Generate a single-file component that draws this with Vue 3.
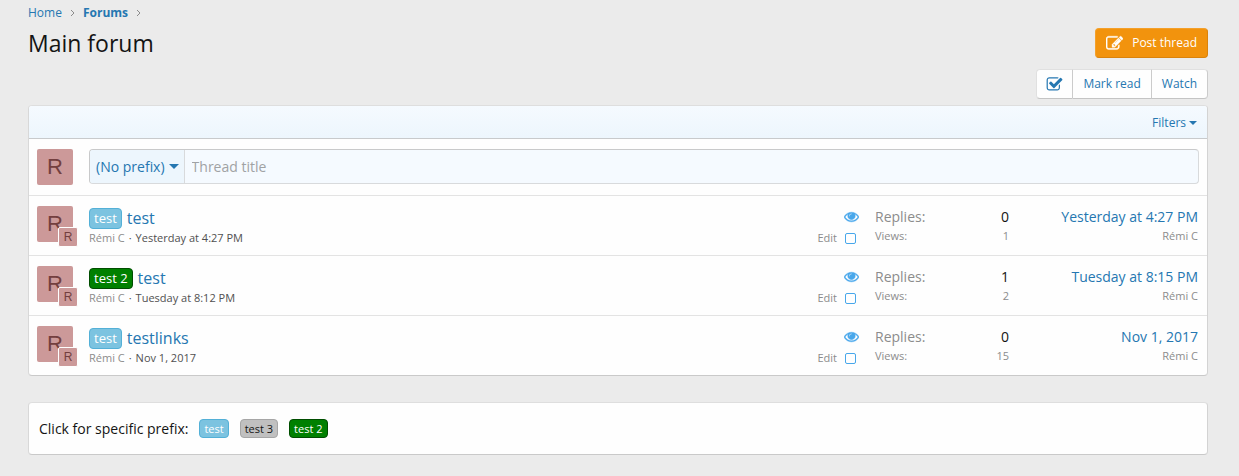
<template>
  <div class="page">
    <nav class="breadcrumbs" aria-label="Breadcrumb">
      <a href="#">Home</a>
      <svg class="breadcrumbs__sep" viewBox="0 0 5 8"><path d="M1 1l3 3-3 3" /></svg>
      <a href="#" class="breadcrumbs__current">Forums</a>
      <svg class="breadcrumbs__sep" viewBox="0 0 5 8"><path d="M1 1l3 3-3 3" /></svg>
    </nav>

    <header class="title-bar">
      <h1 class="title-bar__title">Main forum</h1>
      <button class="btn-post" type="button">
        <svg class="icon icon--post" viewBox="0 0 1792 1792">
          <path d="M888 1184l116-116-152-152-116 116v56h96v96h56zm440-720q-16-16-33 1l-350 350q-17 17-1 33t33-1l350-350q17-17 1-33zm80 594v190q0 119-84.5 203.5t-203.5 84.5h-832q-119 0-203.5-84.5t-84.5-203.5v-832q0-119 84.5-203.5t203.5-84.5h832q63 0 117 25 15 7 18 23 3 17-9 29l-49 49q-14 14-32 8-23-6-45-6h-832q-66 0-113 47t-47 113v832q0 66 47 113t113 47h832q66 0 113-47t47-113v-126q0-13 9-22l64-64q15-15 35-7t20 29zm-96-738l288 288-672 672h-288v-288zm444 132l-92 92-288-288 92-92q28-28 68-28t68 28l152 152q28 28 28 68t-28 68z" />
        </svg>
        <span>Post thread</span>
      </button>
    </header>

    <div class="toolbar">
      <div class="btn-group">
        <button class="btn-group__item" type="button" aria-label="Select threads">
          <svg class="icon icon--check" viewBox="0 0 1792 1792">
            <path d="M1472 930v318q0 119-84.5 203.5t-203.5 84.5h-832q-119 0-203.5-84.5t-84.5-203.5v-832q0-119 84.5-203.5t203.5-84.5h832q63 0 117 25 15 7 18 23 3 17-9 29l-49 49q-10 10-23 10-3 0-9-2-23-6-45-6h-832q-66 0-113 47t-47 113v832q0 66 47 113t113 47h832q66 0 113-47t47-113v-254q0-13 9-22l64-64q10-10 23-10 6 0 12 3 20 8 20 29zm231-489l-814 814q-24 24-57 24t-57-24l-430-430q-24-24-24-57t24-57l110-110q24-24 57-24t57 24l263 263 647-647q24-24 57-24t57 24l110 110q24 24 24 57t-24 57z" />
          </svg>
        </button>
        <button class="btn-group__item" type="button">Mark read</button>
        <button class="btn-group__item" type="button">Watch</button>
      </div>
    </div>

    <main class="block">
      <div class="filter-bar">
        <button class="filter-bar__btn" type="button">
          Filters
          <svg class="caret caret--small" viewBox="0 0 8 4"><path d="M0 0h8L4 4z" /></svg>
        </button>
      </div>

      <form class="quick-thread" @submit.prevent>
        <div class="avatar">R</div>
        <div class="quick-thread__field">
          <label class="quick-thread__prefix">
            <select v-model="prefix" aria-label="Prefix">
              <option value="">(No prefix)</option>
              <option v-for="item in prefixes" :key="item.label" :value="item.label">{{ item.label }}</option>
            </select>
            <svg class="caret" viewBox="0 0 10 5"><path d="M0 0h10L5 5z" /></svg>
          </label>
          <input v-model="title" class="quick-thread__title" type="text" placeholder="Thread title" aria-label="Thread title" />
        </div>
      </form>

      <article v-for="thread in threads" :key="thread.id" class="thread">
        <div class="avatar">
          R
          <span class="avatar avatar--mini">R</span>
        </div>
        <div class="thread__main">
          <div class="thread__title">
            <a href="#" class="label" :class="`label--${thread.prefix.color}`">{{ thread.prefix.label }}</a>
            <a href="#" class="thread__link">{{ thread.title }}</a>
          </div>
          <div class="thread__meta">
            <a href="#" class="muted">{{ thread.author }}</a>
            <span class="thread__dot">·</span>
            <a href="#" class="thread__date">{{ thread.date }}</a>
          </div>
        </div>
        <div class="thread__extra">
          <svg class="icon icon--eye" viewBox="0 0 1792 1792" role="img" aria-label="Watched">
            <path d="M1664 960q-152-236-381-353 61 104 61 225 0 185-131.5 316.5t-316.5 131.5-316.5-131.5-131.5-316.5q0-121 61-225-229 117-381 353 133 205 333.5 326.5t434.5 121.5 434.5-121.5 333.5-326.5zm-720-384q0-20-14-34t-34-14q-125 0-214.5 89.5t-89.5 214.5q0 20 14 34t34 14 34-14 14-34q0-86 61-147t147-61q20 0 34-14t14-34zm848 384q0 34-20 69-140 230-376.5 368.5t-499.5 138.5-499.5-139-376.5-368q-20-35-20-69t20-69q140-229 376.5-368t499.5-139 499.5 139 376.5 368q20 35 20 69z" />
          </svg>
          <div class="thread__tools">
            <a href="#" class="muted">Edit</a>
            <input v-model="thread.selected" type="checkbox" :aria-label="`Select ${thread.title}`" />
          </div>
        </div>
        <dl class="stats">
          <div class="stats__pair stats__pair--major">
            <dt>Replies:</dt>
            <dd>{{ thread.replies }}</dd>
          </div>
          <div class="stats__pair">
            <dt>Views:</dt>
            <dd>{{ thread.views }}</dd>
          </div>
        </dl>
        <div class="latest">
          <a href="#" class="latest__date">{{ thread.latest }}</a>
          <a href="#" class="latest__user">{{ thread.author }}</a>
        </div>
      </article>
    </main>

    <section class="block prefix-bar">
      <span class="prefix-bar__text">Click for specific prefix:</span>
      <a
        v-for="item in prefixes"
        :key="item.label"
        href="#"
        class="label label--compact"
        :class="`label--${item.color}`"
      >{{ item.label }}</a>
    </section>
  </div>
</template>

<script setup>
import { ref } from "vue";

const prefixes = [
  { label: "test", color: "sky" },
  { label: "test 3", color: "silver" },
  { label: "test 2", color: "green" },
];

const prefix = ref("");
const title = ref("");

const threads = ref([
  {
    id: 1,
    prefix: prefixes[0],
    title: "test",
    author: "Rémi C",
    date: "Yesterday at 4:27 PM",
    replies: 0,
    views: 1,
    latest: "Yesterday at 4:27 PM",
    selected: false,
  },
  {
    id: 2,
    prefix: prefixes[2],
    title: "test",
    author: "Rémi C",
    date: "Tuesday at 8:12 PM",
    replies: 1,
    views: 2,
    latest: "Tuesday at 8:15 PM",
    selected: false,
  },
  {
    id: 3,
    prefix: prefixes[0],
    title: "testlinks",
    author: "Rémi C",
    date: "Nov 1, 2017",
    replies: 0,
    views: 15,
    latest: "Nov 1, 2017",
    selected: false,
  },
]);
</script>

<style>
body {
  background: #ebebeb;
}
</style>

<style scoped>
.page {
  padding: 4px 31px 20px 28px;
  font-family: "Open Sans", "Noto Sans", sans-serif;
  font-size: 14px;
  line-height: 20px;
  color: #141414;
}

.page *,
.page *::before {
  box-sizing: border-box;
}

a {
  color: #2577b1;
  text-decoration: none;
}

a:hover {
  text-decoration: underline;
}

button,
select,
input {
  font: inherit;
}

button {
  cursor: pointer;
}

.icon,
.caret {
  display: block;
  fill: currentColor;
}

.caret {
  width: 10px;
  height: 5px;
}

.caret--small {
  width: 8px;
  height: 4px;
}

.breadcrumbs {
  display: flex;
  align-items: center;
  gap: 8px;
  font-size: 12px;
  line-height: 18px;
}

.breadcrumbs__current {
  font-weight: 700;
}

.breadcrumbs__sep {
  width: 5px;
  height: 8px;
  fill: none;
  stroke: #8c8c8c;
}

.title-bar {
  display: flex;
  justify-content: space-between;
  align-items: center;
  margin-top: 6px;
}

.title-bar__title {
  margin: 0;
  font-size: 23px;
  line-height: 30px;
  font-weight: 400;
}

.btn-post {
  display: flex;
  align-items: center;
  gap: 9px;
  height: 30px;
  padding: 0 10px;
  border: 1px solid;
  border-color: #f4a02a #da830c #da830c #f4a02a;
  border-radius: 4px;
  background: #f2930d;
  color: #ffffff;
  font-size: 12px;
}

.icon--post {
  width: 17px;
  height: 17px;
  stroke: currentColor;
  stroke-width: 40;
}

.toolbar {
  display: flex;
  justify-content: flex-end;
  margin: 11px 0 6px;
}

.btn-group {
  display: flex;
}

.btn-group__item {
  height: 30px;
  padding: 0 10px;
  border: 1px solid;
  border-color: #e0e0e0 #cbcbcb #c4c4c4 #e0e0e0;
  border-left-width: 0;
  background: #fefefe;
  color: #2577b1;
  font-size: 12px;
}

.btn-group__item:first-child {
  padding: 0 9px;
  border-left-width: 1px;
  border-radius: 4px 0 0 4px;
}

.btn-group__item:last-child {
  border-radius: 0 4px 4px 0;
}

.icon--check {
  width: 17px;
  height: 17px;
}

.block {
  border: 1px solid;
  border-color: #dedede #d3d3d3 #c9c9c9 #d8d8d8;
  border-radius: 4px;
  background: #fefefe;
}

.filter-bar {
  display: flex;
  justify-content: flex-end;
  align-items: center;
  height: 33px;
  padding: 1px 10px 0;
  border-bottom: 1px solid #c8cacc;
  border-radius: 3px 3px 0 0;
  background: linear-gradient(#f5faff, #edf6fd);
}

.filter-bar__btn {
  display: flex;
  align-items: center;
  gap: 3px;
  padding: 0;
  border: 0;
  background: none;
  color: #2577b1;
  font-size: 12px;
}

.quick-thread,
.thread {
  display: grid;
  column-gap: 16px;
  padding: 10px 9px 10px 8px;
}

.quick-thread {
  grid-template-columns: 36px minmax(0, 1fr);
  padding-right: 8px;
}

.avatar {
  position: relative;
  display: flex;
  align-items: center;
  justify-content: center;
  width: 36px;
  height: 36px;
  border-radius: 2px;
  background: #cc9999;
  color: #733f3f;
  font-family: "Liberation Sans", Arial, sans-serif;
  font-size: 22px;
}

.avatar--mini {
  position: absolute;
  right: -5px;
  bottom: -5px;
  width: 20px;
  height: 20px;
  border: 1px solid #fefefe;
  font-size: 12px;
}

.quick-thread__field {
  display: flex;
  height: 35px;
  border: 1px solid;
  border-color: #c8c9ca #d8dadc #d8dadc #c8c9ca;
  border-radius: 4px;
  background: #f5faff;
  overflow: hidden;
}

.quick-thread__prefix {
  display: flex;
  align-items: center;
  gap: 4px;
  padding: 0 5px 0 6px;
  border-right: 1px solid #d8dadc;
  background: #edf6fd;
  color: #2577b1;
}

.quick-thread__prefix select {
  appearance: none;
  field-sizing: content;
  padding: 0;
  border: 0;
  background: none;
  color: inherit;
  cursor: pointer;
}

.quick-thread__title {
  flex: 1;
  min-width: 0;
  padding: 0 7px;
  border: 0;
  background: none;
  color: #141414;
}

.quick-thread__title::placeholder {
  color: #a0a2a4;
}

.thread {
  grid-template-columns: 36px minmax(0, 1fr) auto 134px 173px;
  height: 60px;
  border-top: 1px solid #e3e3e3;
}

.thread__title {
  display: flex;
  align-items: center;
  gap: 5px;
  height: 24px;
}

.thread__link {
  font-size: 16px;
}

.thread__meta {
  display: flex;
  gap: 4px;
  font-size: 11px;
  line-height: 16px;
}

.thread__meta a,
.thread__dot {
  color: #505050;
}

.thread__meta .muted,
.muted {
  color: #8c8c8c;
}

.label {
  padding: 0 4px;
  border: 1px solid;
  border-radius: 4px;
  font-size: 13px;
  line-height: 19px;
}

.label--compact {
  font-size: 11px;
  line-height: 17px;
}

.label--sky {
  border-color: #53b0d7;
  background: #7cc3e0;
  color: #ffffff;
}

.label--silver {
  border-color: #a6a6a6;
  background: #c0c0c0;
  color: #141414;
}

.label--green {
  border-color: #004d00;
  background: #008000;
  color: #ffffff;
}

.thread__extra {
  display: flex;
  flex-direction: column;
  align-items: flex-end;
  gap: 5px;
  padding-top: 3px;
}

.icon--eye {
  width: 15px;
  height: 15px;
  color: #47a7eb;
  stroke: currentColor;
  stroke-width: 50;
}

.thread__tools {
  display: flex;
  align-items: center;
  gap: 8px;
  padding-right: 3px;
  font-size: 11px;
  line-height: 18px;
}

.thread__tools input {
  appearance: none;
  width: 11px;
  height: 11px;
  margin: 0;
  border: 1px solid #47a7eb;
  border-radius: 2px;
}

.thread__tools input:checked {
  background: #47a7eb;
}

.stats {
  margin: 0;
}

.stats__pair {
  display: flex;
  justify-content: space-between;
  font-size: 11px;
  line-height: 18px;
  color: #8c8c8c;
}

.stats__pair dd {
  margin: 0;
}

.stats__pair--major {
  font-size: 14px;
  line-height: 21px;
}

.stats__pair--major dd {
  color: #141414;
}

.latest {
  display: flex;
  flex-direction: column;
  align-items: flex-end;
}

.latest__date {
  line-height: 21px;
}

.latest__user {
  color: #8c8c8c;
  font-size: 11px;
  line-height: 18px;
}

.prefix-bar {
  display: flex;
  align-items: center;
  gap: 11px;
  min-height: 53px;
  margin-top: 26px;
  padding: 0 10px;
}
</style>
